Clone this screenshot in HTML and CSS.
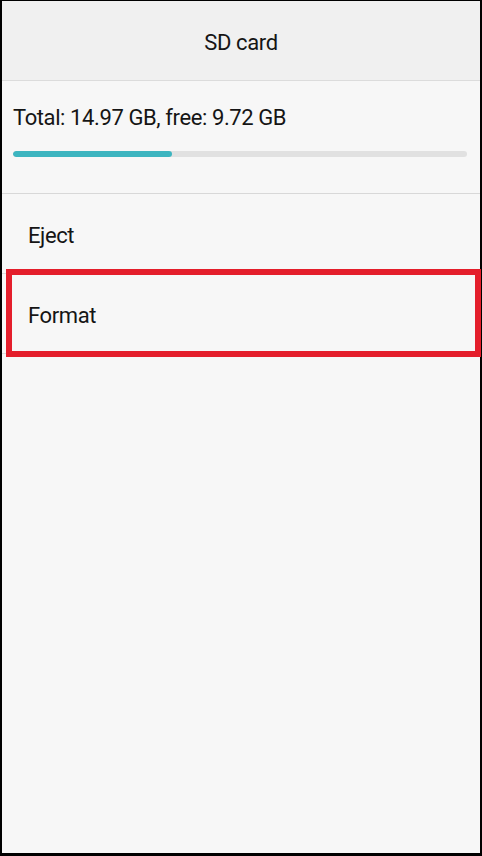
FILE: index.html
```html
<!DOCTYPE html>
<html lang="en">
<head>
<meta charset="utf-8">
<title>SD card</title>
<link rel="stylesheet" href="styles.css">
</head>
<body>
<div class="frame">
  <header class="titlebar">SD card</header>
  <section class="storage">
    <div class="storage-text">Total: 14.97 GB, free: 9.72 GB</div>
    <div class="bar"><div class="bar-fill" style="width:35.1%"></div></div>
  </section>
  <ul class="menu">
    <li class="menu-item">Eject</li>
    <li class="menu-item highlighted">Format</li>
  </ul>
</div>
</body>
</html>
```
FILE: styles.css
```css
html, body {
  margin: 0;
  padding: 0;
  background: #ffffff;
}
.frame {
  width: 482px;
  height: 856px;
  box-sizing: border-box;
  border: 2px solid #000;
  border-top-width: 1px;
  border-bottom-width: 3px;
  background: #f7f7f7;
  font-family: Roboto, "Liberation Sans", sans-serif;
  color: #151515;
  display: flex;
  flex-direction: column;
  font-size: 22px;
  letter-spacing: -0.4px;
}
.titlebar {
  height: 80px;
  flex: none;
  background: #f0f0f0;
  border-bottom: 1px solid #dcdcdc;
  display: flex;
  align-items: center;
  justify-content: center;
  padding-top: 3px;
  box-sizing: border-box;
}
.storage {
  height: 113px;
  flex: none;
  box-sizing: border-box;
  padding: 24px 11px 0 11px;
  border-bottom: 1px solid #d8d8d8;
}
.storage-text {
  line-height: 26px;
}
.bar {
  margin-top: 20px;
  height: 6px;
  border-radius: 3px;
  background: #e1e1e1;
  margin-right: 2px;
  overflow: hidden;
}
.bar-fill {
  height: 100%;
  border-radius: 3px;
  background: #3db5c0;
}
.menu {
  list-style: none;
  margin: 0;
  padding: 0;
}
.menu-item {
  height: 80px;
  box-sizing: border-box;
  border-bottom: 1px solid #dcdcdc;
  display: flex;
  align-items: center;
  padding-left: 26px;
  padding-top: 4px;
  position: relative;
}
.menu-item.highlighted::after {
  content: "";
  position: absolute;
  left: 4px;
  right: -1px;
  top: -5px;
  bottom: -4px;
  border: 6px solid #e41e2b;
}
```
